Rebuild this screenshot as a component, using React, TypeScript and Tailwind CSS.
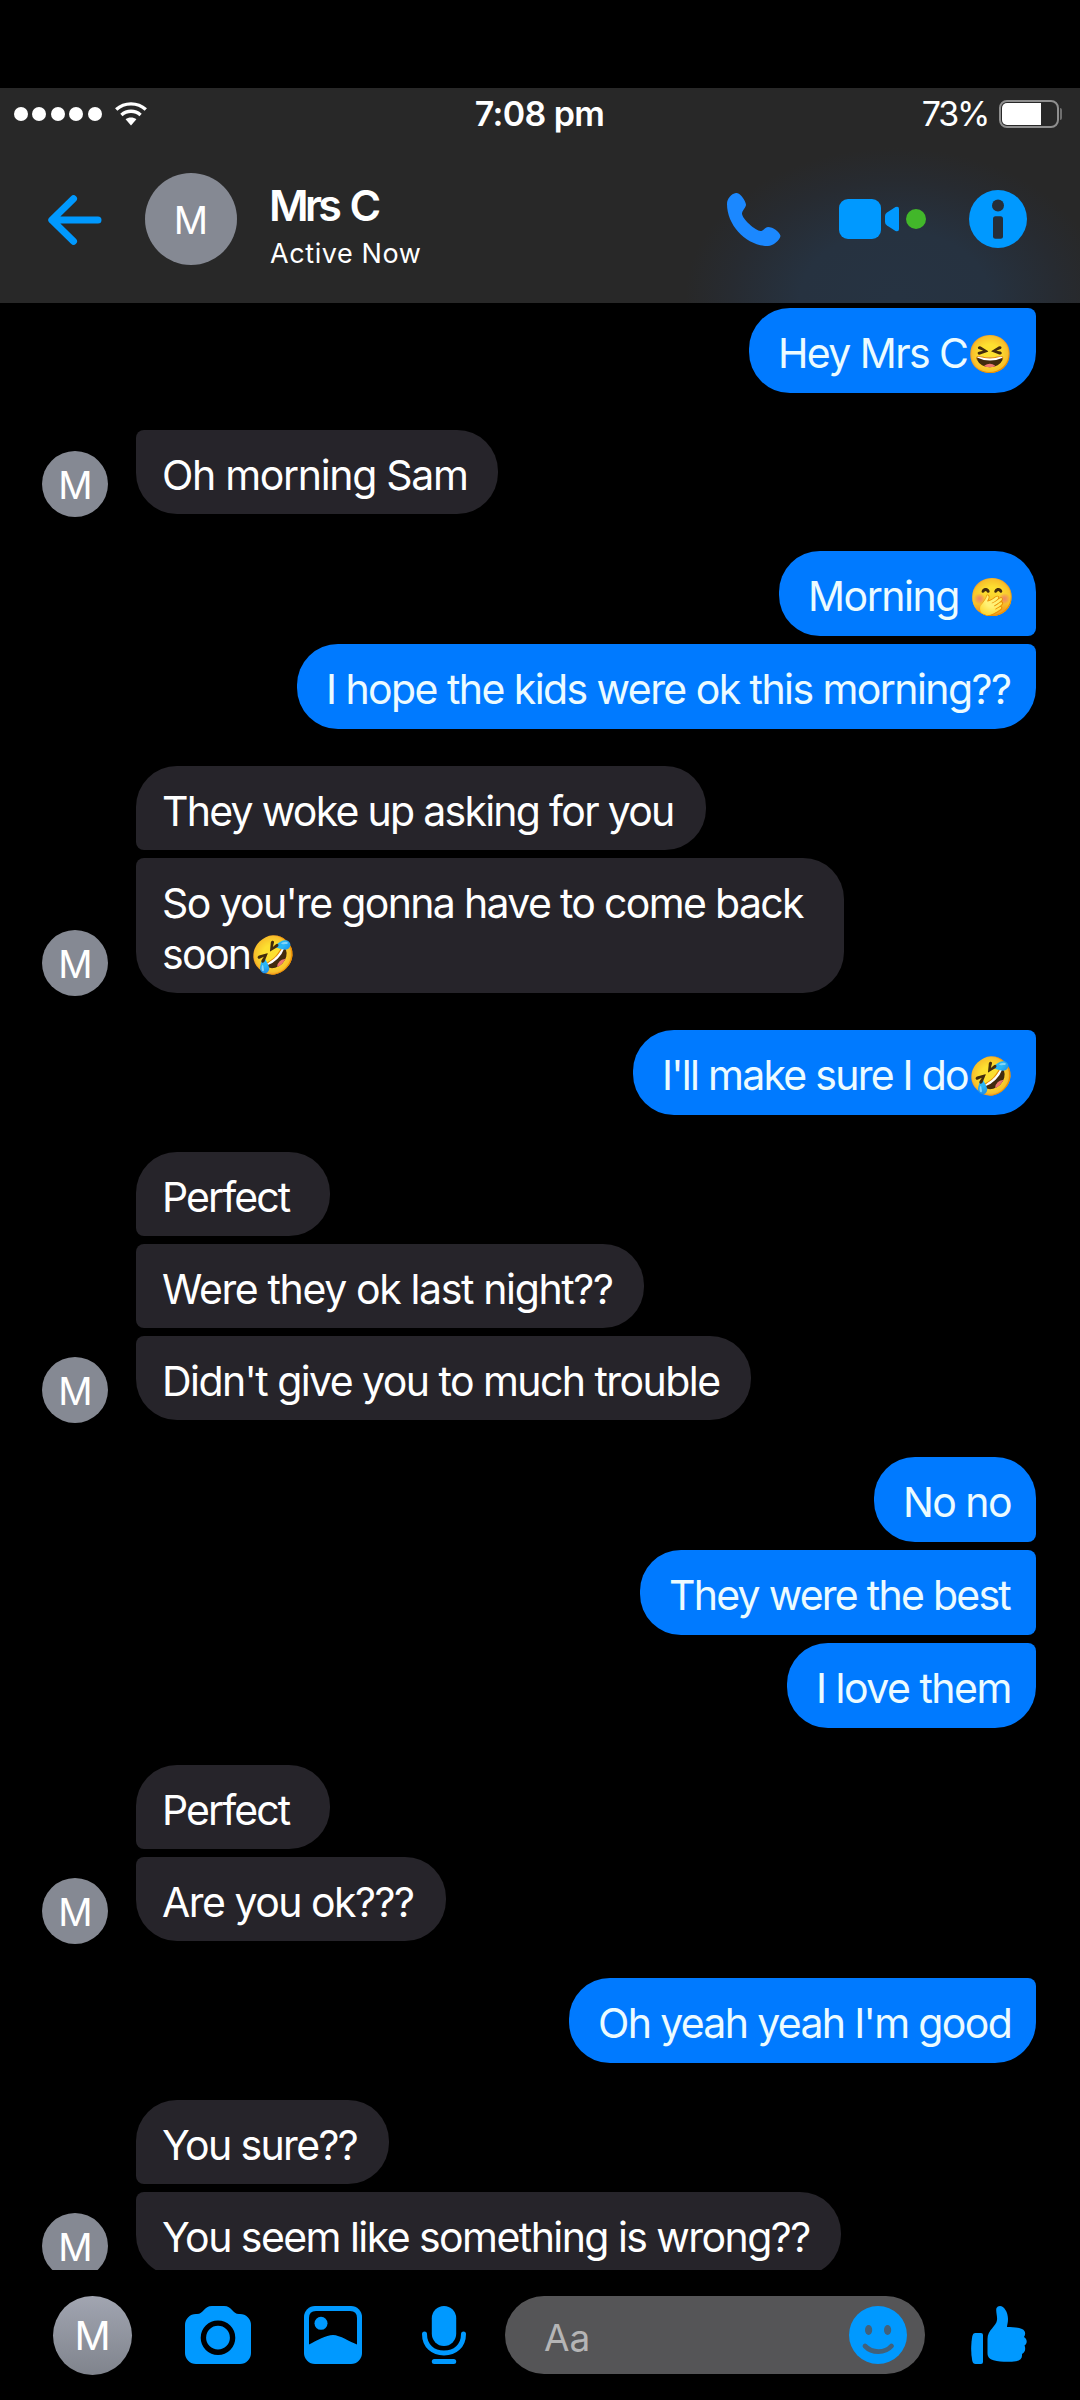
import clsx from "clsx";

// ---------------------------
// Types
// ---------------------------
type Message = {
  text: string;
  emoji?: string;
  width: string;
  tracking: string;
};

type MessageGroup = {
  from: "me" | "them";
  messages: Message[];
};

// ---------------------------
// Data
// ---------------------------
const groups: MessageGroup[] = [
  {
    from: "me",
    messages: [{ text: "Hey Mrs C", emoji: "😆", width: "w-[287px]", tracking: "tracking-[-1.6px]" }],
  },
  {
    from: "them",
    messages: [{ text: "Oh morning Sam", width: "w-[362px]", tracking: "tracking-[-1.31px]" }],
  },
  {
    from: "me",
    messages: [
      { text: "Morning ", emoji: "🤭", width: "w-[257px]", tracking: "tracking-[-1.45px]" },
      { text: "I hope the kids were ok this morning??", width: "w-[739px]", tracking: "tracking-[-1.57px]" },
    ],
  },
  {
    from: "them",
    messages: [
      { text: "They woke up asking for you", width: "w-[570px]", tracking: "tracking-[-1.73px]" },
      { text: "So you're gonna have to come back\nsoon", emoji: "🤣", width: "w-[708px]", tracking: "tracking-[-1.67px]" },
    ],
  },
  {
    from: "me",
    messages: [{ text: "I'll make sure I do", emoji: "🤣", width: "w-[403px]", tracking: "tracking-[-1.74px]" }],
  },
  {
    from: "them",
    messages: [
      { text: "Perfect", width: "w-[194px]", tracking: "tracking-[-1.9px]" },
      { text: "Were they ok last night??", width: "w-[508px]", tracking: "tracking-[-1.37px]" },
      { text: "Didn't give you to much trouble", width: "w-[615px]", tracking: "tracking-[-1.56px]" },
    ],
  },
  {
    from: "me",
    messages: [
      { text: "No no", width: "w-[162px]", tracking: "tracking-[-1.56px]" },
      { text: "They were the best", width: "w-[396px]", tracking: "tracking-[-1.75px]" },
      { text: "I love them", width: "w-[249px]", tracking: "tracking-[-1.5px]" },
    ],
  },
  {
    from: "them",
    messages: [
      { text: "Perfect", width: "w-[194px]", tracking: "tracking-[-1.9px]" },
      { text: "Are you ok???", width: "w-[310px]", tracking: "tracking-[-1.51px]" },
    ],
  },
  {
    from: "me",
    messages: [{ text: "Oh yeah yeah I'm good", width: "w-[467px]", tracking: "tracking-[-1.66px]" }],
  },
  {
    from: "them",
    messages: [
      { text: "You sure??", width: "w-[253px]", tracking: "tracking-[-1.64px]" },
      { text: "You seem like something is wrong??", width: "w-[705px]", tracking: "tracking-[-1.56px]" },
    ],
  },
];

// ---------------------------
// Icons
// ---------------------------
function WifiIcon() {
  return (
    <svg width="32" height="24" viewBox="0 0 32 24" fill="none" stroke="#fff" strokeWidth="3.4">
      <path d="M1.2 7.6C9.5 0 22.5 0 30.8 7.6" />
      <path d="M6.4 13C12 8 20 8 25.6 13" />
      <path d="M10.6 17.3C13.5 15 18.5 15 21.4 17.3L16 23.4Z" fill="#fff" stroke="none" />
    </svg>
  );
}

function BackIcon() {
  return (
    <svg width="54" height="50" viewBox="0 0 54 50" fill="none" stroke="#0099ff" strokeWidth="7" strokeLinecap="round" strokeLinejoin="round">
      <path d="M25.5 3.8L3.8 25L25.5 46.2M4 25H50" />
    </svg>
  );
}

function PhoneIcon() {
  return (
    <svg width="54" height="53" viewBox="0 0 54 53" fill="#1b88ff">
      <path d="M9 0C4 .8 0 6 0 11C0 33 20 53 41 53C46 53 53 47 53.5 43C53 39 46 34 41 34C38 34 36.5 38 33.5 38C29 38 15 26 15 20.5C15 17.5 19 14.5 19 11.5C18.5 8 13.5 -.5 9 0Z" />
    </svg>
  );
}

function VideoIcon() {
  return (
    <svg width="60" height="40" viewBox="0 0 60 40" fill="#0099ff">
      <rect width="42" height="40" rx="9" />
      <path d="M48 13.5L56.5 8Q60 6.8 60 10V30Q60 33.2 56.5 32L48 26.5Q46 25.2 46 23V17Q46 14.8 48 13.5Z" />
    </svg>
  );
}

function InfoIcon() {
  return (
    <svg width="58" height="58" viewBox="0 0 58 58">
      <circle cx="29" cy="29" r="29" fill="#0099ff" />
      <circle cx="29" cy="15.5" r="6" fill="#262e38" />
      <rect x="24" y="26.3" width="10" height="22.5" rx="2.5" fill="#262e38" />
    </svg>
  );
}

function CameraIcon() {
  return (
    <svg width="66" height="58" viewBox="0 0 66 58">
      <path
        d="M11 8H12C18.5 8 19 0 27 0H39C47 0 47.5 8 54 8H55A11 11 0 0 1 66 19V47A11 11 0 0 1 55 58H11A11 11 0 0 1 0 47V19A11 11 0 0 1 11 8Z"
        fill="#0099ff"
      />
      <circle cx="33" cy="31.7" r="14.6" fill="#0099ff" stroke="#000" strokeWidth="5.4" />
    </svg>
  );
}

function PictureIcon() {
  return (
    <svg width="58" height="58" viewBox="0 0 58 58">
      <rect width="58" height="58" rx="11" fill="#0099ff" />
      <path d="M5 38.5V12Q5 5 12 5H46Q53 5 53 12V38.5C46 36 36 29 29 29C22 29 13 34.5 5 38.5Z" fill="#000" />
      <circle cx="17" cy="17.3" r="6.5" fill="#0099ff" />
    </svg>
  );
}

function MicIcon() {
  return (
    <svg width="44" height="58" viewBox="0 0 44 58" fill="#0099ff">
      <rect x="9.8" width="24.4" height="40" rx="12.2" />
      <path d="M2.5 28C2.5 40 11 47 22 47S41.5 40 41.5 28" fill="none" stroke="#0099ff" strokeWidth="5" strokeLinecap="round" />
      <rect x="9.8" y="53" width="24.4" height="5" rx="2.5" />
    </svg>
  );
}

function SmileIcon() {
  return (
    <svg width="58" height="58" viewBox="0 0 58 58">
      <circle cx="29" cy="29" r="29" fill="#0099ff" />
      <ellipse cx="19.6" cy="24" rx="3.6" ry="5" fill="#43617a" />
      <ellipse cx="38.6" cy="24" rx="3.6" ry="5" fill="#43617a" />
      <path d="M16 40C23 47.5 36 47.5 42.5 40" fill="none" stroke="#43617a" strokeWidth="4.8" strokeLinecap="round" />
    </svg>
  );
}

function ThumbIcon() {
  return (
    <svg width="56" height="58" viewBox="0 0 56 58" fill="#0099ff">
      <path d="M4 27H10Q12 27 12 29V56Q12 58 10 58H4.5Q2 58 1.3 55Q-1 42.5 1.3 30Q2 27 4 27Z" />
      <path d="M29 0C33 0 37 6 37 13C37 17 36 19 36 21C42 21 47 21.3 51 23C54.5 24.5 55 28 53 31C56.5 33 56.5 37.5 53.5 39.5C55 43 54 46.5 51 48C51.5 52 49.5 54.5 45 55.3C38 56.3 29 56 22.5 54.3C18.5 53.2 16.5 51 16.5 47V33C16.5 24 25.5 20 26 14C26.5 10 24.5 5 25.5 2Q26.5 0 29 0Z" />
    </svg>
  );
}

// ---------------------------
// Chat pieces
// ---------------------------
function Bubble({ message, mine, first, last }: { message: Message; mine: boolean; first: boolean; last: boolean }) {
  const lines = message.text.split("\n");
  return (
    <div
      className={clsx(
        "rounded-[41px] pt-5 text-[41px] leading-[51px]",
        mine ? "bg-[#007aff] pb-[14px] pl-[29px] text-[#ecfbff]" : "bg-[#26242a] pb-[13px] pl-[26px] text-white",
        mine && (!first || last) && "rounded-tr-[8px]",
        mine && !last && "rounded-br-[8px]",
        !mine && (!first || last) && "rounded-tl-[8px]",
        !mine && !last && "rounded-bl-[8px]",
        message.width,
        message.tracking
      )}
    >
      {lines.map((line, i) => (
        <div key={i} className="h-[51px] whitespace-pre">
          {line}
          {message.emoji && i === lines.length - 1 && (
            <span className="align-[1px] text-[37px] leading-[40px] tracking-normal">{message.emoji}</span>
          )}
        </div>
      ))}
    </div>
  );
}

function Group({ group }: { group: MessageGroup }) {
  const mine = group.from === "me";
  return (
    <div className={clsx("flex items-end", mine ? "justify-end pr-11" : "pl-[42px]")}>
      {!mine && (
        <div className="-mb-[3px] mr-7 flex size-[66px] shrink-0 items-center justify-center rounded-full bg-[#858993] pl-px pt-[2px] text-[38px] text-white">
          M
        </div>
      )}
      <div className={clsx("flex flex-col gap-2", mine ? "items-end" : "items-start")}>
        {group.messages.map((m, i) => (
          <Bubble key={i} message={m} mine={mine} first={i === 0} last={i === group.messages.length - 1} />
        ))}
      </div>
    </div>
  );
}

function StatusBar() {
  return (
    <div className="grid h-[51px] grid-cols-3 items-center pl-[14px] pr-[18px] text-[34px] leading-[40px]">
      <div className="flex items-center">
        <div className="flex gap-[4.4px]">
          {[0, 1, 2, 3, 4].map((i) => (
            <span key={i} className="size-[14px] rounded-full bg-white" />
          ))}
        </div>
        <div className="ml-[13px]">
          <WifiIcon />
        </div>
      </div>
      <div className="pl-[3px] text-center font-semibold tracking-[-0.63px]">7:08 pm</div>
      <div className="flex items-center justify-end">
        <span className="tracking-[-2.3px]">73%</span>
        <div className="ml-[11px] flex h-7 w-[60px] rounded-[8px] border-2 border-[#8f8f8f] p-px">
          <div className="w-[39px] rounded-l-[5px] bg-white" />
        </div>
        <div className="ml-px h-3 w-[2px] rounded-r bg-[#6f6f6f]" />
      </div>
    </div>
  );
}

function Header() {
  return (
    <header className="h-[215px] shrink-0 bg-[#282828] bg-[radial-gradient(ellipse_210px_150px_at_895px_210px,#263342_0%,#263240_45%,#272b31_78%,#28282800_100%)]">
      <StatusBar />
      <div className="flex h-40 items-center pl-12 pr-[53px]">
        <div className="pt-[2px]">
          <BackIcon />
        </div>
        <div className="ml-[43px] flex size-[92px] items-center justify-center rounded-full bg-[#858993] pt-[2px] text-[38px]">M</div>
        <div className="ml-8 flex flex-col gap-[7px] pt-[12px]">
          <div className="text-[43px] font-semibold leading-[50px] tracking-[-3.7px] [word-spacing:4px]">Mrs C</div>
          <div className="pl-px text-[27px] leading-[34px] tracking-[0.6px]">Active Now</div>
        </div>
        <div className="ml-auto flex items-center">
          <PhoneIcon />
          <div className="ml-[58px] flex items-center">
            <VideoIcon />
            <span className="ml-[7px] size-5 rounded-full bg-[#42b72a]" />
          </div>
          <div className="ml-[43px]">
            <InfoIcon />
          </div>
        </div>
      </div>
    </header>
  );
}

function Composer() {
  return (
    <footer className="flex h-[130px] shrink-0 items-center bg-black pl-[53px] pr-[53px]">
      <div className="flex size-[79px] items-center justify-center rounded-full bg-linear-to-b from-[#a1a5b1] to-[#80848d] pt-[2px] text-[40px]">M</div>
      <div className="ml-[53px]">
        <CameraIcon />
      </div>
      <div className="ml-[53px]">
        <PictureIcon />
      </div>
      <div className="ml-[60px]">
        <MicIcon />
      </div>
      <div className="ml-[39px] flex h-[78px] w-[420px] items-center justify-between rounded-full bg-[#555557] pb-px pl-[39px] pr-[18px]">
        <span className="pt-[5px] text-[37px] leading-none text-[#b5b5b6]">Aa</span>
        <SmileIcon />
      </div>
      <div className="ml-auto">
        <ThumbIcon />
      </div>
    </footer>
  );
}

export default function App() {
  return (
    <div className="flex h-[2400px] w-[1080px] flex-col overflow-hidden bg-black pt-[88px] font-['Inter',sans-serif] text-white">
      <Header />
      <main className="flex min-h-0 flex-1 flex-col gap-[37px] overflow-hidden pt-[5px]">
        {groups.map((g, i) => (
          <Group key={i} group={g} />
        ))}
      </main>
      <Composer />
    </div>
  );
}
